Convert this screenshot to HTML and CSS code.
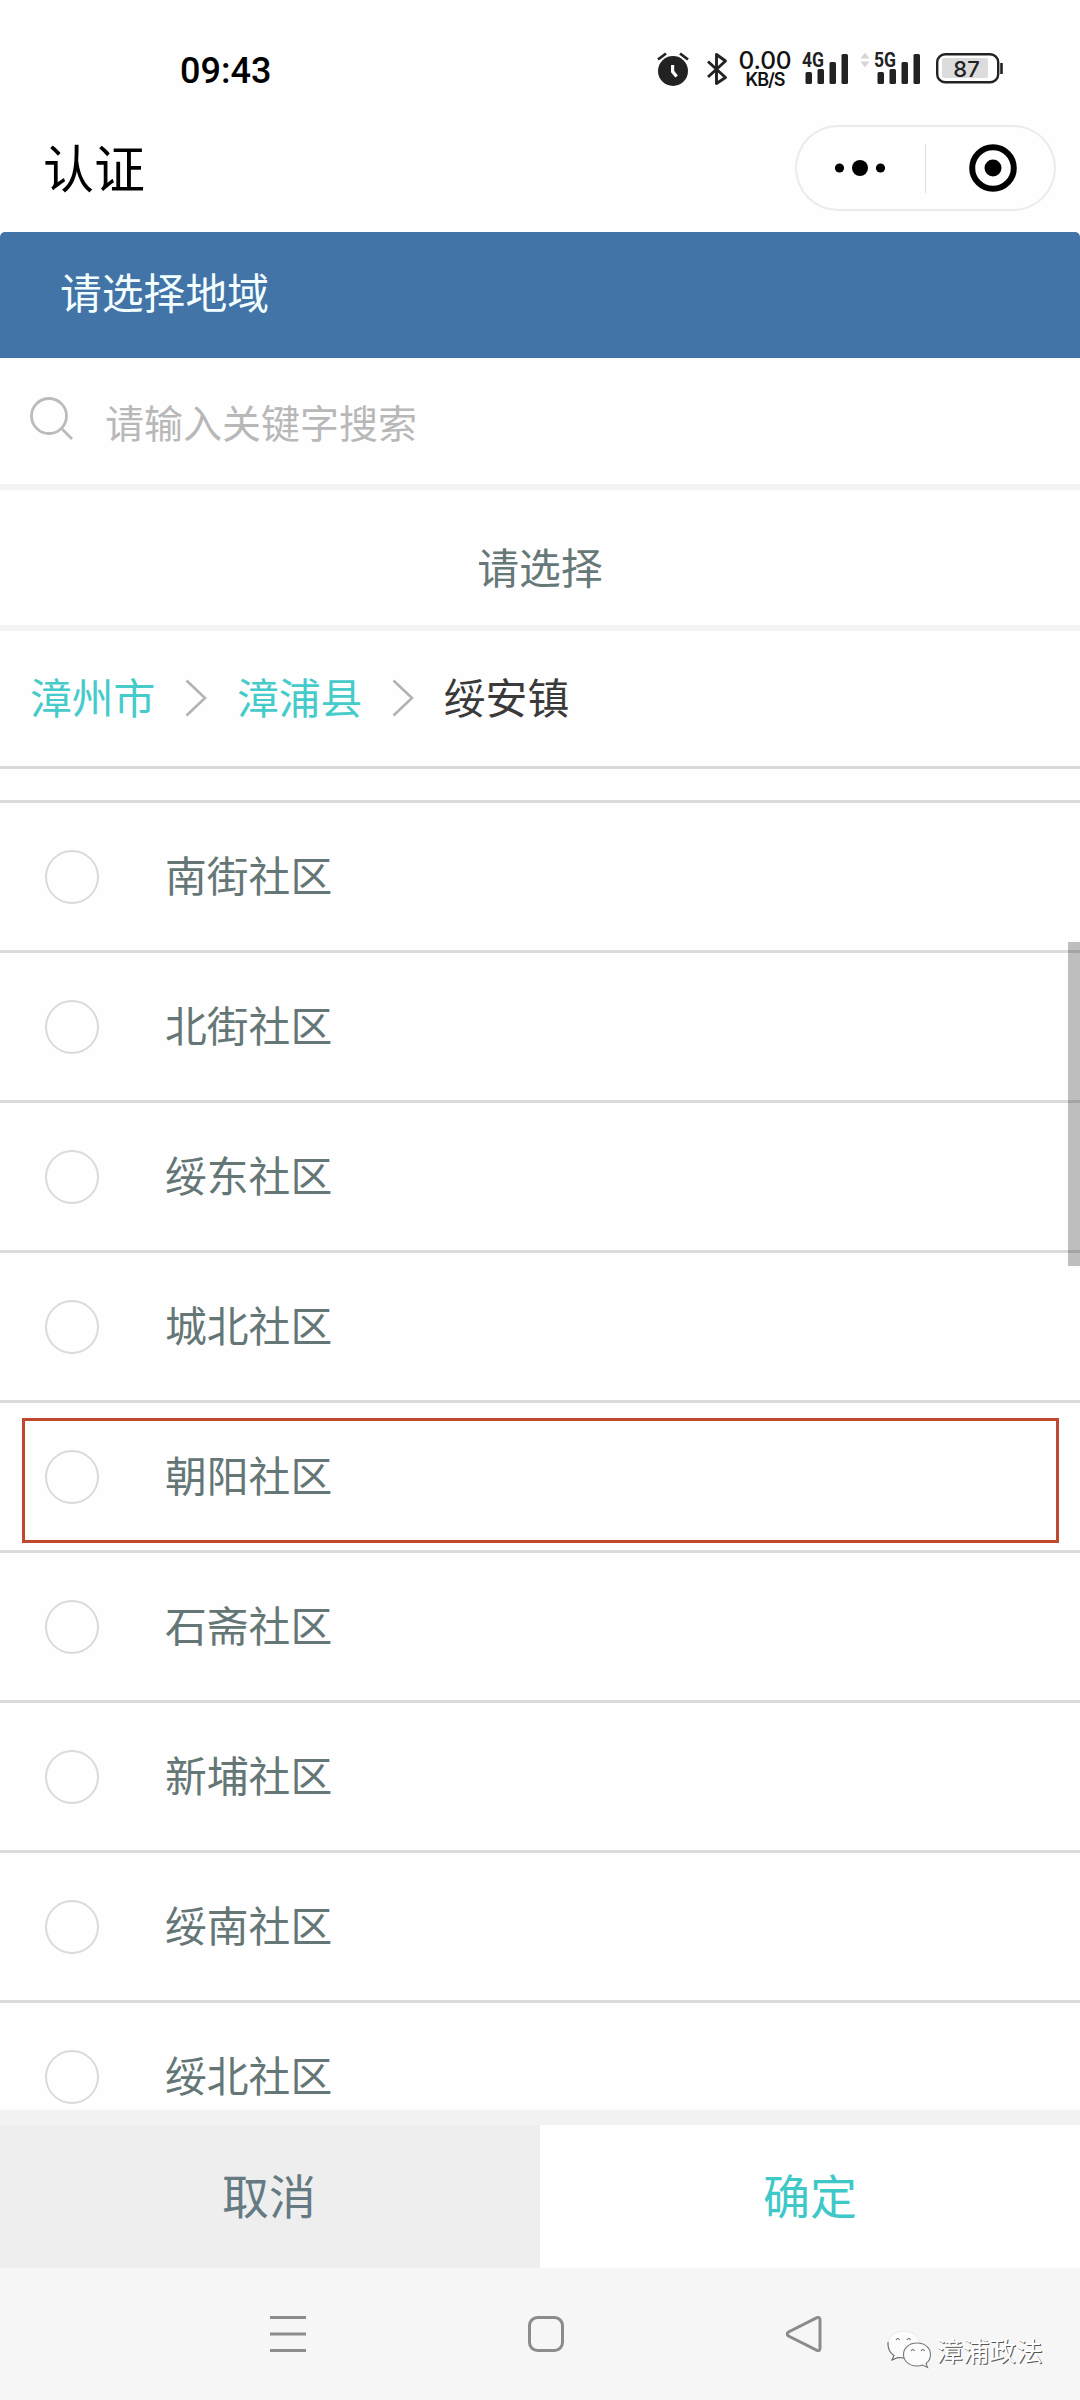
FILE: index.html
```
<!DOCTYPE html>
<html lang="zh-CN">
<head>
<meta charset="utf-8">
<title>认证</title>
<link rel="stylesheet" href="styles.css">
</head>
<body>
<div class="screen">
  <header class="status">
    <time class="clock">09:43</time>
    <div class="status-icons">
      <svg class="alarm" width="32" height="36" viewBox="0 0 32 36">
        <circle cx="16" cy="20" r="15" fill="#222"/>
        <path d="M1 8.500 9 2.500M31 8.500 23 2.500" stroke="#222" stroke-width="2.800" fill="none"/>
        <path d="M15.600 14v6.600l4 5" stroke="#fff" stroke-width="3.200" fill="none"/>
      </svg>
      <svg class="bluetooth" width="22" height="36" viewBox="0 0 22 36">
        <path d="M2 10.500 19.500 26.500 10.500 32.500V3.500L19.500 10 2 26" stroke="#222" stroke-width="2.900" fill="none" stroke-linejoin="round"/>
      </svg>
      <div class="speed"><span class="rate">0.00</span><span class="unit">KB/S</span></div>
      <svg class="signal" width="48" height="36" viewBox="0 0 48 36">
        <g fill="#222"><rect x="3.500" y="21" width="6.500" height="12" rx="1.500"/><rect x="15.500" y="18" width="6.500" height="15" rx="1.500"/><rect x="27.500" y="11" width="6.500" height="22" rx="1.500"/><rect x="39.500" y="3" width="6.500" height="30" rx="1.500"/></g>
        <text class="net" x="0" y="15.800" textLength="22" lengthAdjust="spacingAndGlyphs">4G</text>
      </svg>
      <svg class="signal" width="62" height="36" viewBox="-14 0 62 36">
        <path d="M-13.500 7.500-9 1.500l4.500 6zM-13.500 10.500h9L-9 16.500z" fill="#d6d6d6"/>
        <g fill="#222"><rect x="3.500" y="21" width="6.500" height="12" rx="1.500"/><rect x="15.500" y="18" width="6.500" height="15" rx="1.500"/><rect x="27.500" y="11" width="6.500" height="22" rx="1.500"/><rect x="39.500" y="3" width="6.500" height="30" rx="1.500"/></g>
        <text class="net" x="0" y="15.800" textLength="22" lengthAdjust="spacingAndGlyphs">5G</text>
      </svg>
      <svg class="battery" width="68" height="36" viewBox="0 0 68 36">
        <rect x="1.200" y="4.200" width="61" height="28" rx="8" fill="#fff" stroke="#222" stroke-width="2.400"/>
        <rect x="6" y="8" width="46" height="20" rx="2" fill="#dcdcdc"/>
        <path d="M65.500 13v11" stroke="#222" stroke-width="2.600"/>
        <text class="level" x="30.500" y="26.500" text-anchor="middle">87</text>
      </svg>
    </div>
  </header>

  <div class="titlebar">
    <h1 class="title">认证</h1>
    <div class="capsule">
      <svg width="130" height="86" viewBox="0 0 130 86">
        <circle cx="44.500" cy="43" r="4.600"/><circle cx="65" cy="43" r="8"/><circle cx="85.500" cy="43" r="4.600"/>
      </svg>
      <span class="capsule-line"></span>
      <svg width="129" height="86" viewBox="0 0 129 86">
        <circle cx="67" cy="43" r="20.800" fill="none" stroke="#000" stroke-width="6"/><circle cx="67" cy="43" r="8.500"/>
      </svg>
    </div>
  </div>

  <main class="picker">
    <h2 class="picker-head">请选择地域</h2>
    <div class="search">
      <svg width="44" height="44" viewBox="0 0 44 44" fill="none" stroke="#bbb" stroke-width="2.800">
        <circle cx="19" cy="19" r="17.500"/><path d="M31.500 31.500 42 42"/>
      </svg>
      <span class="hint">请输入关键字搜索</span>
    </div>
    <div class="choose">请选择</div>
    <nav class="crumbs">
      <a>漳州市</a>
      <svg width="22" height="38" viewBox="0 0 22 38"><path d="M1.500 1.500 20 19 1.500 36.500"/></svg>
      <a>漳浦县</a>
      <svg width="22" height="38" viewBox="0 0 22 38"><path d="M1.500 1.500 20 19 1.500 36.500"/></svg>
      <span>绥安镇</span>
    </nav>
    <ul class="list">
      <li class="row row-cut"></li>
      <li class="row"><i class="radio"></i><span>南街社区</span></li>
      <li class="row"><i class="radio"></i><span>北街社区</span></li>
      <li class="row"><i class="radio"></i><span>绥东社区</span></li>
      <li class="row"><i class="radio"></i><span>城北社区</span></li>
      <li class="row marked"><i class="radio"></i><span>朝阳社区</span></li>
      <li class="row"><i class="radio"></i><span>石斋社区</span></li>
      <li class="row"><i class="radio"></i><span>新埔社区</span></li>
      <li class="row"><i class="radio"></i><span>绥南社区</span></li>
      <li class="row"><i class="radio"></i><span>绥北社区</span></li>
      <li class="scrollbar"></li>
    </ul>
    <div class="actions">
      <div class="btn cancel">取消</div>
      <div class="btn confirm">确定</div>
    </div>
  </main>

  <footer class="sysnav">
    <svg width="38" height="38" viewBox="0 0 38 38"><path d="M1 2.500h36M1 19h36M1 35.500h36"/></svg>
    <svg width="38" height="38" viewBox="0 0 38 38"><rect x="2.500" y="2.500" width="33" height="33" rx="8"/></svg>
    <svg width="38" height="38" viewBox="0 0 38 38"><path d="M32 2.700 3.500 17Q1 19 3.500 21L32 35.300Q35 36.500 35 33V5Q35 1.500 32 2.700z"/></svg>
    <div class="account">
      <svg class="chat" width="46" height="40" viewBox="0 0 46 40">
        <path d="M17 1C7.500 1 1 7 1 14.500c0 5 2.500 8.500 6 11L5 30l6-3c2 .7 4 1 6.500 1C26 28 33 22 33 14.500S26 1 17 1z" fill="#fcfcfc" stroke="#e4e4e4" stroke-width=".8"/>
        <path d="M1 12c-.5 6 2 11 6 13.500L5 30l6-2.500 6 .5M9 10q2-3 3.500 0M20 10q2-3 3.500 0" fill="none" stroke="#666" stroke-width="1.100"/>
        <path d="M30 13c-8 0-13.500 5-13.500 11.500S22 36 30 36c2 0 4-.3 5.500-1l5 2.500-1.500-4c3-2 4.500-5 4.500-9C43.500 18 38 13 30 13z" fill="#fcfcfc" stroke="#777" stroke-width="1.100"/>
        <path d="M24 21q2-3 3.500 0M34 21q2-3 3.500 0" fill="none" stroke="#666" stroke-width="1.100"/>
      </svg>
      <span>漳浦政法</span>
    </div>
  </footer>
</div>
</body>
</html>
```
FILE: styles.css
```
* { box-sizing: border-box; margin: 0; padding: 0; }
body { background: #fefefe; font-family: "Noto Sans CJK SC", sans-serif; font-weight: 400; }
svg { display: block; flex: none; overflow: visible; }
.screen { width: 1080px; height: 2400px; display: flex; flex-direction: column; overflow: hidden; }

.status { height: 125px; display: flex; justify-content: space-between; align-items: flex-start; padding: 51px 76px 0 180px; }
.clock { font: 500 36px/40px Roboto, sans-serif; color: #000; }
.status-icons { display: flex; height: 36px; }
.bluetooth { margin-left: 17px; }
.speed { width: 54px; margin-left: 10px; display: flex; flex-direction: column; align-items: center; font-family: Inter, sans-serif; color: #111; white-space: nowrap; }
.rate { font-size: 24.5px; line-height: 18px; font-weight: 500; letter-spacing: -.2px; }
.unit { font-size: 18px; line-height: 21px; font-weight: 600; letter-spacing: -1px; }
.signal { margin-left: 10px; }
.battery { margin-left: 14px; margin-top: -1px; }
.net { font: 700 20px Roboto, sans-serif; fill: #222; stroke: #fefefe; stroke-width: 1.5px; paint-order: stroke; }
.level { font: 500 22px Inter, sans-serif; fill: #222; }

.titlebar { height: 107px; display: flex; justify-content: space-between; padding: 0 24px 0 43px; }
.title { font-size: 51px; line-height: 82px; font-weight: 400; color: #000; }
.capsule { width: 261px; height: 86px; border-radius: 43px; box-shadow: inset 0 0 0 2px #ebebeb; display: flex; align-items: center; }
.capsule-line { width: 1px; height: 49px; background: #ddd; }

.picker { flex: none; height: 2036px; display: flex; flex-direction: column; }
.picker-head { height: 126px; background: #4374a7; border-radius: 5px 5px 0 0; color: #f3ffff; font-size: 41.8px; font-weight: 400; line-height: 118px; padding-left: 60px; }
.search { height: 132px; border-bottom: 6px solid #f3f3f3; display: flex; align-items: center; padding-left: 30px; }
.search svg { margin-bottom: 5px; }
.hint { margin: 0 0 1px 31px; font-size: 39px; line-height: 60px; color: #b8b8b8; }
.choose { height: 141px; border-bottom: 6px solid #f3f3f3; text-align: center; color: #667878; font-size: 41.8px; line-height: 152px; }
.crumbs { height: 138px; border-bottom: 3px solid #d9d9d9; display: flex; align-items: center; padding-left: 30px; font-size: 41.8px; line-height: 60px; color: #3a3a3a; }
.crumbs a { color: #45cbc9; }
.crumbs a, .crumbs span { margin-bottom: 6px; }
.crumbs svg { margin: 0 29.5px 1px 30px; fill: none; stroke: #b3b3b3; stroke-width: 2.6px; }
.list { height: 1341px; list-style: none; overflow: hidden; position: relative; }
.row { height: 150px; border-bottom: 3px solid #dbdbdb; display: flex; align-items: center; padding-left: 45px; color: #647675; font-size: 41.8px; line-height: 60px; position: relative; }
.row span { margin-bottom: 5px; }
.row-cut { height: 34px; padding: 0; }
.radio { width: 54px; height: 54px; margin-right: 66px; border: 2px solid #dadada; border-radius: 50%; }
.marked::after { content: ""; box-sizing: border-box; position: absolute; left: 22px; right: 21px; top: 15px; height: 125px; border: 3px solid #bf482e; }
.scrollbar { position: absolute; right: 0; top: 173px; width: 12px; height: 324px; background: rgba(0, 0, 0, .25); }
.actions { height: 158px; flex: none; border-top: 15px solid #f2f2f2; display: flex; }
.btn { width: 540px; text-align: center; font-size: 47px; line-height: 137px; }
.cancel { background: #eee; color: #667a84; padding-right: 2px; }
.confirm { background: #fff; color: #3fc8c8; }

.sysnav { flex: 1; background: #f6f6f6; display: flex; align-items: flex-start; padding: 47px 0 0 269px; }
.sysnav > svg { margin-right: 220px; fill: none; stroke: #8c8c8c; stroke-width: 3px; }
.sysnav > svg:nth-child(3) { margin-right: 64px; }
.account { display: flex; align-items: center; margin-top: 15px; font-size: 26.7px; line-height: 40px; color: #fff; text-shadow: 1px 1px 0 #555; white-space: nowrap; }
.chat { margin-right: 3px; }
```
